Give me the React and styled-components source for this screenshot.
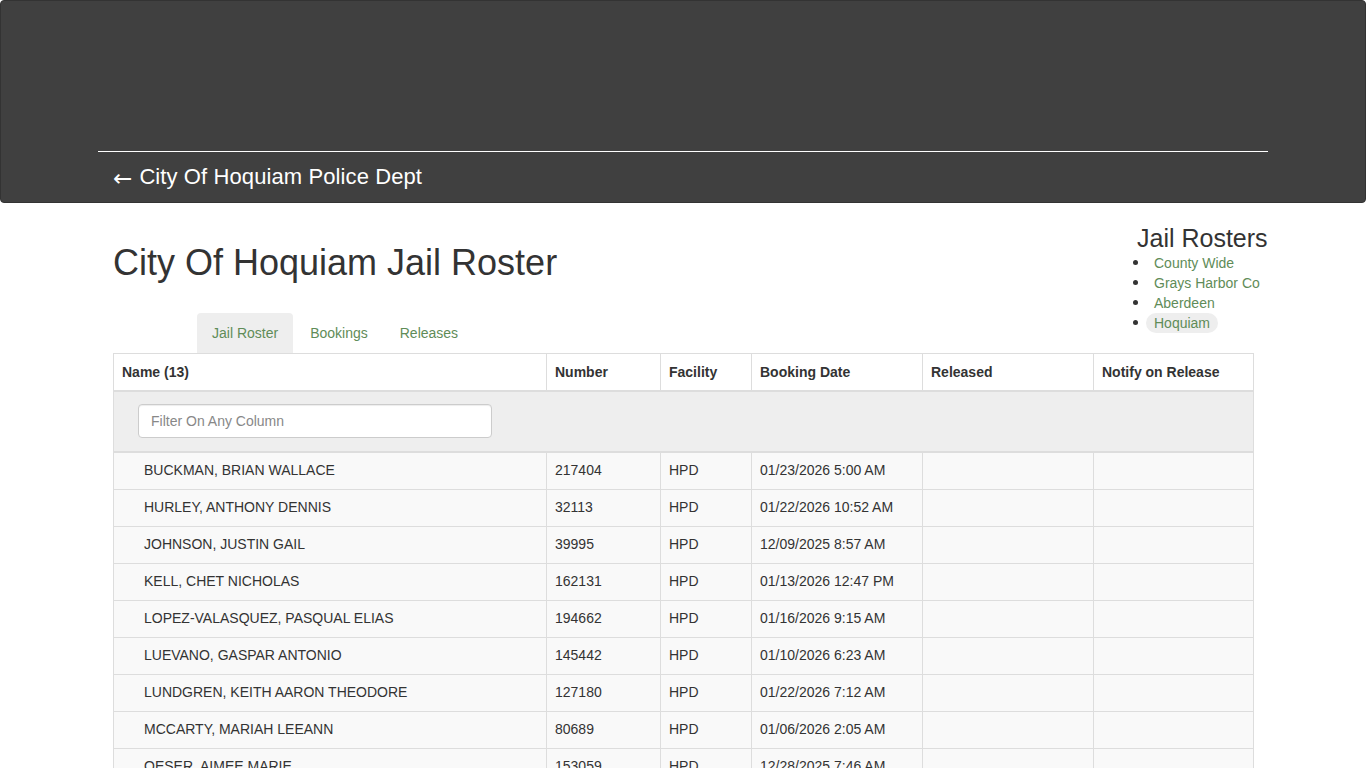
import React from 'react';
import styled, { createGlobalStyle } from 'styled-components';

const GlobalStyle = createGlobalStyle`
  html, body {
    margin: 0;
    padding: 0;
    background: #fff;
  }
  body {
    font-family: "Liberation Sans", Arial, Helvetica, sans-serif;
    font-size: 14px;
    line-height: 1.42857;
    color: #333;
  }
  * {
    box-sizing: border-box;
  }
`;

const LINK = '#5f8c58';

const Navbar = styled.header`
  height: 203px;
  background: #404040;
  border: 1px solid #333;
  border-radius: 4px;
  display: flex;
  flex-direction: column;
  justify-content: flex-end;
`;

const NavInner = styled.div`
  width: 1170px;
  margin: 0 auto;
  border-top: 1px solid #fff;
`;

const Brand = styled.a`
  display: flex;
  align-items: center;
  gap: 7px;
  height: 50px;
  padding: 0 15px;
  color: #fff;
  font-size: 22px;
  letter-spacing: 0.1px;
  text-decoration: none;
`;

const Arrow = styled.span`
  font-family: "DejaVu Sans", sans-serif;
  font-size: 23px;
  position: relative;
  top: 1px;
`;

const Container = styled.main`
  width: 1170px;
  margin: 0 auto;
  padding: 0 15px;
`;

const TopSection = styled.section`
  display: flex;
  justify-content: space-between;
  align-items: flex-start;
`;

const LeftColumn = styled.div`
  display: flex;
  flex-direction: column;
`;

const Title = styled.h1`
  margin: 40px 0 30px;
  font-size: 36px;
  font-weight: 500;
  line-height: 1.1;
  color: #333;
`;

const Tabs = styled.ul`
  display: flex;
  list-style: none;
  margin: 0 0 0 84px;
  padding: 0;
  gap: 2px;
`;

const Tab = styled.li`
  a {
    display: block;
    height: 40px;
    padding: 11px 15px 9px;
    color: ${LINK};
    text-decoration: none;
    border-radius: 4px 4px 0 0;
    background: ${(p) => (p.$active ? '#eee' : 'transparent')};
  }
`;

const Sidebar = styled.aside`
  width: 140px;
  margin-top: 21px;
  margin-right: -15px;
`;

const SidebarTitle = styled.h3`
  margin: 0;
  padding-left: 9px;
  font-size: 25px;
  font-weight: 500;
  line-height: 1.15;
  color: #333;
`;

const SidebarList = styled.ul`
  margin: 0;
  padding: 0 0 0 5px;
  list-style: none;
  font-size: 14px;
  line-height: 20px;
`;

const SidebarItem = styled.li`
  display: flex;
  align-items: center;

  &::before {
    content: '';
    width: 5px;
    height: 5px;
    margin-right: 16px;
    border-radius: 50%;
    background: #333;
    flex: none;
  }
`;

const SidebarLink = styled.a`
  display: inline-block;
  margin-left: -8px;
  padding: 0 8px;
  border-radius: 10px;
  color: ${LINK};
  text-decoration: none;
  background: ${(p) => (p.$active ? '#eee' : 'transparent')};
`;

const Table = styled.table`
  width: 1140px;
  border-collapse: collapse;
  table-layout: fixed;
  border: 1px solid #ddd;
`;

const HeadCell = styled.th`
  height: 38px;
  padding: 9px 8px 7px;
  text-align: left;
  font-weight: 700;
  border: 1px solid #ddd;
  border-bottom: 2px solid #ddd;
  background: #fff;
  white-space: nowrap;
`;

const FilterCell = styled.td`
  padding: 12px 24px 13px;
  background: #eee;
  border-bottom: 2px solid #ddd;
`;

const FilterInput = styled.input`
  display: block;
  width: 354px;
  height: 34px;
  padding: 6px 12px;
  font-family: inherit;
  font-size: 14px;
  color: #555;
  border: 1px solid #ccc;
  border-radius: 4px;
  background: #fff;
  box-shadow: inset 0 1px 1px rgba(0, 0, 0, 0.075);

  &::placeholder {
    color: #888;
  }
`;

const Row = styled.tr`
  background: #f9f9f9;
`;

const Cell = styled.td`
  height: 37px;
  padding: 8px 8px 8px ${(p) => (p.$name ? '30px' : '8px')};
  border: 1px solid #ddd;
  white-space: nowrap;
  overflow: hidden;
`;

const columns = [
  { label: 'Name (13)', width: 433 },
  { label: 'Number', width: 114 },
  { label: 'Facility', width: 91 },
  { label: 'Booking Date', width: 171 },
  { label: 'Released', width: 171 },
  { label: 'Notify on Release', width: 160 },
];

const inmates = [
  ['BUCKMAN, BRIAN WALLACE', '217404', 'HPD', '01/23/2026 5:00 AM'],
  ['HURLEY, ANTHONY DENNIS', '32113', 'HPD', '01/22/2026 10:52 AM'],
  ['JOHNSON, JUSTIN GAIL', '39995', 'HPD', '12/09/2025 8:57 AM'],
  ['KELL, CHET NICHOLAS', '162131', 'HPD', '01/13/2026 12:47 PM'],
  ['LOPEZ-VALASQUEZ, PASQUAL ELIAS', '194662', 'HPD', '01/16/2026 9:15 AM'],
  ['LUEVANO, GASPAR ANTONIO', '145442', 'HPD', '01/10/2026 6:23 AM'],
  ['LUNDGREN, KEITH AARON THEODORE', '127180', 'HPD', '01/22/2026 7:12 AM'],
  ['MCCARTY, MARIAH LEEANN', '80689', 'HPD', '01/06/2026 2:05 AM'],
  ['OESER, AIMEE MARIE', '153059', 'HPD', '12/28/2025 7:46 AM'],
];

const rosters = [
  { label: 'County Wide' },
  { label: 'Grays Harbor Co' },
  { label: 'Aberdeen' },
  { label: 'Hoquiam', active: true },
];

export default function App() {
  return (
    <>
      <GlobalStyle />
      <Navbar>
        <NavInner>
          <Brand href="#">
            <Arrow>←</Arrow>
            City Of Hoquiam Police Dept
          </Brand>
        </NavInner>
      </Navbar>

      <Container>
        <TopSection>
          <LeftColumn>
            <Title>City Of Hoquiam Jail Roster</Title>
            <Tabs>
              <Tab $active>
                <a href="#">Jail Roster</a>
              </Tab>
              <Tab>
                <a href="#">Bookings</a>
              </Tab>
              <Tab>
                <a href="#">Releases</a>
              </Tab>
            </Tabs>
          </LeftColumn>

          <Sidebar>
            <SidebarTitle>Jail Rosters</SidebarTitle>
            <SidebarList>
              {rosters.map((r) => (
                <SidebarItem key={r.label}>
                  <SidebarLink href="#" $active={r.active}>
                    {r.label}
                  </SidebarLink>
                </SidebarItem>
              ))}
            </SidebarList>
          </Sidebar>
        </TopSection>

        <Table>
          <colgroup>
            {columns.map((c) => (
              <col key={c.label} style={{ width: c.width }} />
            ))}
          </colgroup>
          <thead>
            <tr>
              {columns.map((c) => (
                <HeadCell key={c.label}>{c.label}</HeadCell>
              ))}
            </tr>
            <tr>
              <FilterCell colSpan={6}>
                <FilterInput type="text" placeholder="Filter On Any Column" />
              </FilterCell>
            </tr>
          </thead>
          <tbody>
            {inmates.map(([name, number, facility, date]) => (
              <Row key={number}>
                <Cell $name>{name}</Cell>
                <Cell>{number}</Cell>
                <Cell>{facility}</Cell>
                <Cell>{date}</Cell>
                <Cell />
                <Cell />
              </Row>
            ))}
          </tbody>
        </Table>
      </Container>
    </>
  );
}
